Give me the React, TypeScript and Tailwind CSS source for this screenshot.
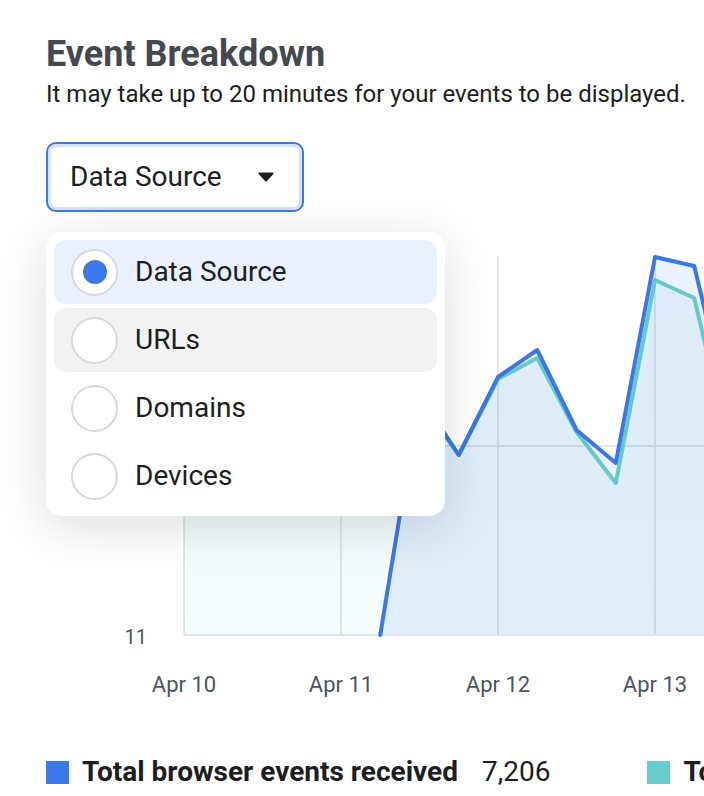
const options = ['Data Source', 'URLs', 'Domains', 'Devices']

// x of data point k: 184 + 39.25k, values are page y (svg top sits at y = 240)
const step = 39.25
const x0 = 184
const blue: [number, number][] = [
  [5, 635], [6, 395], [7, 455], [8, 377], [9, 350], [10, 430], [11, 463], [12, 257], [13, 266], [14, 430],
]
const teal: [number, number][] = [
  [0, 330], [1, 320], [2, 340], [3, 330], [4, 350], [5, 420], [6, 400], [7, 455], [8, 379], [9, 358],
  [10, 432], [11, 483], [12, 280], [13, 298], [14, 463],
]

const top = 240
const base = 635 - top

function pts(data: [number, number][]) {
  return data.map(([k, y]) => `${x0 + step * k},${y - top}`).join(' ')
}

function area(data: [number, number][]) {
  const first = x0 + step * data[0][0]
  const last = x0 + step * data[data.length - 1][0]
  return `M${first},${base} L${pts(data).split(' ').join(' L')} L${last},${base} Z`
}

function Chart() {
  const days = ['Apr 10', 'Apr 11', 'Apr 12', 'Apr 13']
  return (
    <svg width="704" height="470" viewBox="0 0 704 470" className="block">
      <defs>
        <linearGradient id="tealFill" x1="0" y1="0" x2="0" y2="1">
          <stop offset="0%" stopColor="#66cccc" stopOpacity="0.1" />
          <stop offset="100%" stopColor="#66cccc" stopOpacity="0.07" />
        </linearGradient>
      </defs>
      {days.map((_, i) => (
        <line key={i} x1={x0 + 157 * i} y1={16} x2={x0 + 157 * i} y2={base} stroke="#e3e6ea" strokeWidth="2" />
      ))}
      <line x1={x0} y1={206} x2={704} y2={206} stroke="#e3e6ea" strokeWidth="2" />
      <path d={area(teal)} fill="url(#tealFill)" />
      <path d={area(blue)} fill="#3b78e7" fillOpacity="0.1" />
      <line x1={x0} y1={base} x2={704} y2={base} stroke="#dfe4ea" strokeWidth="2" />
      <polyline points={pts(teal)} fill="none" stroke="#63c9c9" strokeWidth="4" strokeLinejoin="round" />
      <polyline points={pts(blue)} fill="none" stroke="#3b78e7" strokeWidth="4" strokeLinejoin="round" strokeLinecap="round" />
      <text x="147" y={base + 9} textAnchor="end" fontSize="20" fill="#4b5563" fontFamily="Roboto, sans-serif">11</text>
      {days.map((d, i) => (
        <text key={d} x={x0 + 157 * i} y={452} textAnchor="middle" fontSize="22" fill="#4b5563" fontFamily="Roboto, sans-serif">
          {d}
        </text>
      ))}
    </svg>
  )
}

export default function App() {
  return (
    <div className="relative w-[704px] h-[796px] overflow-hidden bg-white font-['Roboto',sans-serif] text-[#1c1e21]">
      <div className="px-[46px] pt-[33px]">
        <h1 className="text-[36px] leading-[42px] font-bold text-[#444950]">Event Breakdown</h1>
        <p className="text-[24px] leading-[30px] mt-[4px] whitespace-nowrap">It may take up to 20 minutes for your events to be displayed.</p>
        <div className="relative mt-[33px] w-[258px]">
          <button className="flex items-center justify-between w-[258px] h-[70px] pl-[22px] pr-[28px] rounded-[10px] border-2 border-[#3b78e7] bg-white shadow-[inset_0_0_0_3px_#d6e2f8] text-[28px] leading-[34px]">
            <span>Data Source</span>
            <svg width="16" height="10" viewBox="0 0 16 10">
              <path d="M1.5 1.5 H14.5 L8 8.5 Z" fill="#1c1e21" stroke="#1c1e21" strokeWidth="2" strokeLinejoin="round" />
            </svg>
          </button>
          <div className="absolute left-0 top-[90px] z-10 w-[399px] p-2 flex flex-col gap-[4px] rounded-[16px] bg-white shadow-[0_10px_50px_rgba(0,0,0,0.14)]">
            {options.map((o, i) => (
              <div
                key={o}
                className={
                  'flex items-center gap-[17px] h-[64px] pl-[17px] rounded-[12px] text-[28px] leading-[34px] ' +
                  (i === 0 ? 'bg-[#eaf0fc]' : i === 1 ? 'bg-[#f2f2f2]' : '')
                }
              >
                <span className="flex items-center justify-center w-[47px] h-[47px] rounded-full border-2 border-[#d8d8d8] bg-white">
                  {i === 0 && <span className="w-[24px] h-[24px] rounded-full bg-[#3b78e7]" />}
                </span>
                <span>{o}</span>
              </div>
            ))}
          </div>
        </div>
      </div>
      <div className="mt-[28px]">
        <Chart />
      </div>
      <div className="flex items-center gap-[97px] pl-[46px] mt-[45px] whitespace-nowrap">
        <div className="flex items-center">
          <span className="w-[23px] h-[23px] bg-[#3b78e7]" />
          <span className="ml-[13px] text-[28px] leading-[34px] font-bold">Total browser events received</span>
          <span className="ml-[24px] text-[28px] leading-[34px]">7,206</span>
        </div>
        <div className="flex items-center">
          <span className="w-[23px] h-[23px] bg-[#66cccc]" />
          <span className="ml-[13px] text-[28px] leading-[34px] font-bold">Total server events received</span>
        </div>
      </div>
    </div>
  )
}
